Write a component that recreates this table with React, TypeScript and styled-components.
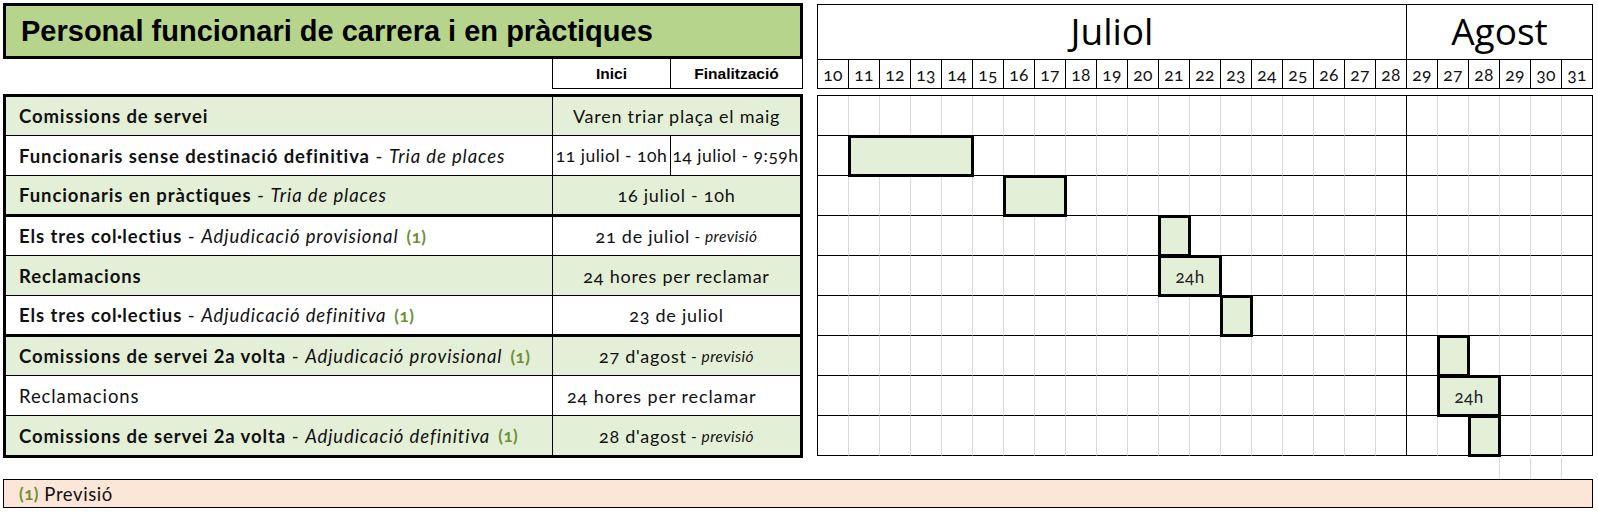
import React from 'react';
import styled, { createGlobalStyle } from 'styled-components';

const GlobalStyle = createGlobalStyle`
  html, body {
    margin: 0;
    padding: 0;
    background: #ffffff;
  }
  body {
    font-family: Lato, 'Open Sans', sans-serif;
    color: #111111;
  }
`;

const JULY = [10, 11, 12, 13, 14, 15, 16, 17, 18, 19, 20, 21, 22, 23, 24, 25, 26, 27, 28];
const AUGUST = [29, 27, 28, 29, 30, 31];
const DAYS = [...JULY, ...AUGUST];
const MONTH_BREAK = JULY.length - 1;
const FILLER_LINES = [21, 22, 23];

interface Bar {
  from: number;
  span: number;
  text?: string;
}

interface Row {
  title: string;
  sub?: string;
  note?: boolean;
  plain?: boolean;
  shaded?: boolean;
  date?: string;
  start?: string;
  end?: string;
  forecast?: boolean;
  loose?: boolean;
  bar?: Bar;
  height: number;
  rule: 'thin' | 'thick' | 'none';
}

const ROWS: Row[] = [
  { title: 'Comissions de servei', shaded: true, date: 'Varen triar plaça el maig', height: 39, rule: 'thin' },
  {
    title: 'Funcionaris sense destinació definitiva',
    sub: 'Tria de places',
    start: '11 juliol - 10h',
    end: '14 juliol - 9:59h',
    bar: { from: 1, span: 4 },
    height: 40,
    rule: 'thin',
  },
  {
    title: 'Funcionaris en pràctiques',
    sub: 'Tria de places',
    shaded: true,
    date: '16 juliol - 10h',
    bar: { from: 6, span: 2 },
    height: 41,
    rule: 'thick',
  },
  {
    title: 'Els tres col·lectius',
    sub: 'Adjudicació provisional',
    note: true,
    date: '21 de juliol',
    forecast: true,
    bar: { from: 11, span: 1 },
    height: 39,
    rule: 'thin',
  },
  {
    title: 'Reclamacions',
    shaded: true,
    date: '24 hores per reclamar',
    bar: { from: 11, span: 2, text: '24h' },
    height: 40,
    rule: 'thin',
  },
  {
    title: 'Els tres col·lectius',
    sub: 'Adjudicació definitiva',
    note: true,
    date: '23 de juliol',
    bar: { from: 13, span: 1 },
    height: 41,
    rule: 'thick',
  },
  {
    title: 'Comissions de servei 2a volta',
    sub: 'Adjudicació provisional',
    note: true,
    shaded: true,
    date: "27 d'agost",
    forecast: true,
    bar: { from: 20, span: 1 },
    height: 39,
    rule: 'thin',
  },
  {
    title: 'Reclamacions',
    plain: true,
    date: '24 hores per reclamar',
    loose: true,
    bar: { from: 20, span: 2, text: '24h' },
    height: 40,
    rule: 'thin',
  },
  {
    title: 'Comissions de servei 2a volta',
    sub: 'Adjudicació definitiva',
    note: true,
    shaded: true,
    date: "28 d'agost",
    forecast: true,
    bar: { from: 21, span: 1 },
    height: 39,
    rule: 'none',
  },
];

export default function App(): React.ReactElement {
  return (
    <>
      <GlobalStyle />
      <Page>
        <LeftTop>
          <TitleBox>Personal funcionari de carrera i en pràctiques</TitleBox>
          <HeaderRow>
            <HeaderSpacer />
            <HeaderCell $width={118}>Inici</HeaderCell>
            <HeaderCell $width={133} $closed>Finalització</HeaderCell>
          </HeaderRow>
        </LeftTop>

        <GanttHeader>
          <MonthCell $span={JULY.length}>Juliol</MonthCell>
          <MonthCell $span={AUGUST.length}>Agost</MonthCell>
          {DAYS.map((day, i) => (
            <DayCell key={i}>{day}</DayCell>
          ))}
        </GanttHeader>

        <Table>
          {ROWS.map((row, i) => (
            <TableRow key={i} $height={row.height} $rule={row.rule} $shaded={!!row.shaded}>
              <LabelCell>
                <Title $plain={!!row.plain}>{row.title}</Title>
                {row.sub && (
                  <>
                    <Dash> - </Dash>
                    <Sub>{row.sub}</Sub>
                  </>
                )}
                {row.note && <Note>(1)</Note>}
              </LabelCell>
              {row.start ? (
                <SplitCell>
                  <DateText $edge>{row.start}</DateText>
                  <DateText>{row.end}</DateText>
                </SplitCell>
              ) : (
                <DateCell $loose={!!row.loose}>
                  {row.date}
                  {row.forecast && (
                    <Forecast>
                      {' - '}
                      <em>previsió</em>
                    </Forecast>
                  )}
                </DateCell>
              )}
            </TableRow>
          ))}
        </Table>

        <GanttBody>
          {ROWS.map((_, r) =>
            DAYS.map((__, c) => <GridCell key={`${r}-${c}`} $row={r} $col={c} />)
          )}
          {ROWS.map((row, r) =>
            row.bar ? (
              <BarBox key={`bar-${r}`} $row={r} $from={row.bar.from} $span={row.bar.span}>
                {row.bar.text}
              </BarBox>
            ) : null
          )}
        </GanttBody>

        <Filler>
          {DAYS.map((_, c) => (
            <FillerCell key={c} $line={FILLER_LINES.includes(c)} />
          ))}
        </Filler>

        <Footer>
          <Note $first>(1)</Note> Previsió
        </Footer>
      </Page>
    </>
  );
}

const Page = styled.div`
  display: grid;
  grid-template-columns: 800px 776px;
  column-gap: 14px;
  row-gap: 5px;
  padding: 3px 0 0 3px;
  align-items: start;
`;

const LeftTop = styled.div`
  display: flex;
  flex-direction: column;
`;

const TitleBox = styled.div`
  box-sizing: border-box;
  height: 56px;
  border: 3px solid #000;
  background: #b6d48b;
  padding-left: 15px;
  display: flex;
  align-items: center;
  font-family: 'Liberation Sans', Arial, sans-serif;
  font-weight: 700;
  font-size: 29px;
  color: #000;
`;

const HeaderRow = styled.div`
  display: flex;
  height: 30px;
`;

const HeaderSpacer = styled.div`
  width: 549px;
`;

const HeaderCell = styled.div<{ $width: number; $closed?: boolean }>`
  box-sizing: border-box;
  width: ${(p) => p.$width}px;
  border-left: 1px solid #000;
  border-bottom: 1px solid #000;
  border-right: ${(p) => (p.$closed ? '1px solid #000' : 'none')};
  display: flex;
  align-items: center;
  justify-content: center;
  font-family: 'Liberation Sans', Arial, sans-serif;
  font-weight: 700;
  font-size: 15.5px;
  color: #000;
`;

const GanttHeader = styled.div`
  margin-top: 1px;
  display: grid;
  grid-template-columns: repeat(25, 31px);
  grid-template-rows: 55px 29px;
  border-top: 1px solid #000;
  border-left: 1px solid #000;
`;

const MonthCell = styled.div<{ $span: number }>`
  grid-column: span ${(p) => p.$span};
  box-sizing: border-box;
  border-right: 1px solid #000;
  border-bottom: 1px solid #000;
  padding-bottom: 3px;
  display: flex;
  align-items: center;
  justify-content: center;
  font-family: 'Open Sans', sans-serif;
  font-size: 37px;
  color: #000;
`;

const DayCell = styled.div`
  box-sizing: border-box;
  border-right: 1px solid #000;
  border-bottom: 1px solid #000;
  display: flex;
  align-items: center;
  justify-content: center;
  font-size: 17.5px;
  letter-spacing: 0.4px;
  font-variant-numeric: oldstyle-nums;
  color: #111;
`;

const Table = styled.div`
  border: 3px solid #000;
  display: flex;
  flex-direction: column;
`;

const TableRow = styled.div<{ $height: number; $rule: 'thin' | 'thick' | 'none'; $shaded: boolean }>`
  box-sizing: border-box;
  height: ${(p) => p.$height}px;
  display: grid;
  grid-template-columns: 547px 1fr;
  background: ${(p) => (p.$shaded ? '#e3efd7' : '#ffffff')};
  border-bottom: ${(p) => (p.$rule === 'thick' ? '3px solid #000' : p.$rule === 'thin' ? '1px solid #000' : 'none')};
`;

const LabelCell = styled.div`
  box-sizing: border-box;
  border-right: 1px solid #000;
  padding-left: 13px;
  display: flex;
  align-items: center;
  white-space: pre;
  font-size: 18.5px;
  letter-spacing: 0.9px;
`;

const Title = styled.span<{ $plain: boolean }>`
  font-weight: ${(p) => (p.$plain ? 400 : 700)};
`;

const Dash = styled.span`
  font-weight: 400;
`;

const Sub = styled.span`
  font-style: italic;
  font-weight: 400;
`;

const Note = styled.span<{ $first?: boolean }>`
  margin-left: ${(p) => (p.$first ? '0' : '8px')};
  font-weight: 700;
  font-size: 17px;
  letter-spacing: 0.5px;
  color: #6c8f38;
  font-variant-numeric: oldstyle-nums;
`;

const DateCell = styled.div<{ $loose: boolean }>`
  display: flex;
  align-items: center;
  justify-content: ${(p) => (p.$loose ? 'flex-start' : 'center')};
  padding-left: ${(p) => (p.$loose ? '14px' : '0')};
  white-space: pre;
  font-size: 18px;
  letter-spacing: ${(p) => (p.$loose ? '0.9px' : '0.75px')};
  font-variant-numeric: oldstyle-nums;
`;

const Forecast = styled.span`
  font-size: 15.5px;
  letter-spacing: 0.4px;
`;

const SplitCell = styled.div`
  display: grid;
  grid-template-columns: 118px 1fr;
`;

const DateText = styled.div<{ $edge?: boolean }>`
  box-sizing: border-box;
  border-right: ${(p) => (p.$edge ? '1px solid #000' : 'none')};
  display: flex;
  align-items: center;
  justify-content: center;
  white-space: pre;
  font-size: 17.5px;
  letter-spacing: 0.5px;
  font-variant-numeric: oldstyle-nums;
`;

const GanttBody = styled.div`
  margin-top: 1px;
  display: grid;
  grid-template-columns: repeat(25, 31px);
  grid-auto-rows: 40px;
  border-top: 1px solid #000;
  border-left: 1px solid #000;
`;

const GridCell = styled.div<{ $row: number; $col: number }>`
  grid-row: ${(p) => p.$row + 1};
  grid-column: ${(p) => p.$col + 1};
  box-sizing: border-box;
  border-bottom: 1px solid #000;
  border-right: 1px solid
    ${(p) => (p.$col === MONTH_BREAK || p.$col === DAYS.length - 1 ? '#000' : '#d9d9d9')};
`;

const BarBox = styled.div<{ $row: number; $from: number; $span: number }>`
  grid-row: ${(p) => p.$row + 1};
  grid-column: ${(p) => p.$from + 1} / span ${(p) => p.$span};
  margin: -1px;
  position: relative;
  z-index: 1;
  box-sizing: border-box;
  border: 3px solid #000;
  background: #e3efd7;
  display: flex;
  align-items: center;
  justify-content: center;
  font-size: 17px;
  letter-spacing: 0.4px;
  font-variant-numeric: oldstyle-nums;
  color: #222;
`;

const Filler = styled.div`
  grid-column: 2;
  margin-top: -5px;
  height: 21px;
  display: grid;
  grid-template-columns: repeat(25, 31px);
  padding-left: 1px;
`;

const FillerCell = styled.div<{ $line: boolean }>`
  box-sizing: border-box;
  border-right: 1px solid ${(p) => (p.$line ? '#d9d9d9' : 'transparent')};
`;

const Footer = styled.div`
  grid-column: 1 / -1;
  box-sizing: border-box;
  margin-top: -5px;
  height: 29px;
  border: 1px solid #000;
  background: #fce6d8;
  padding-left: 15px;
  display: flex;
  align-items: center;
  white-space: pre;
  font-size: 18.5px;
  letter-spacing: 0.6px;
`;
